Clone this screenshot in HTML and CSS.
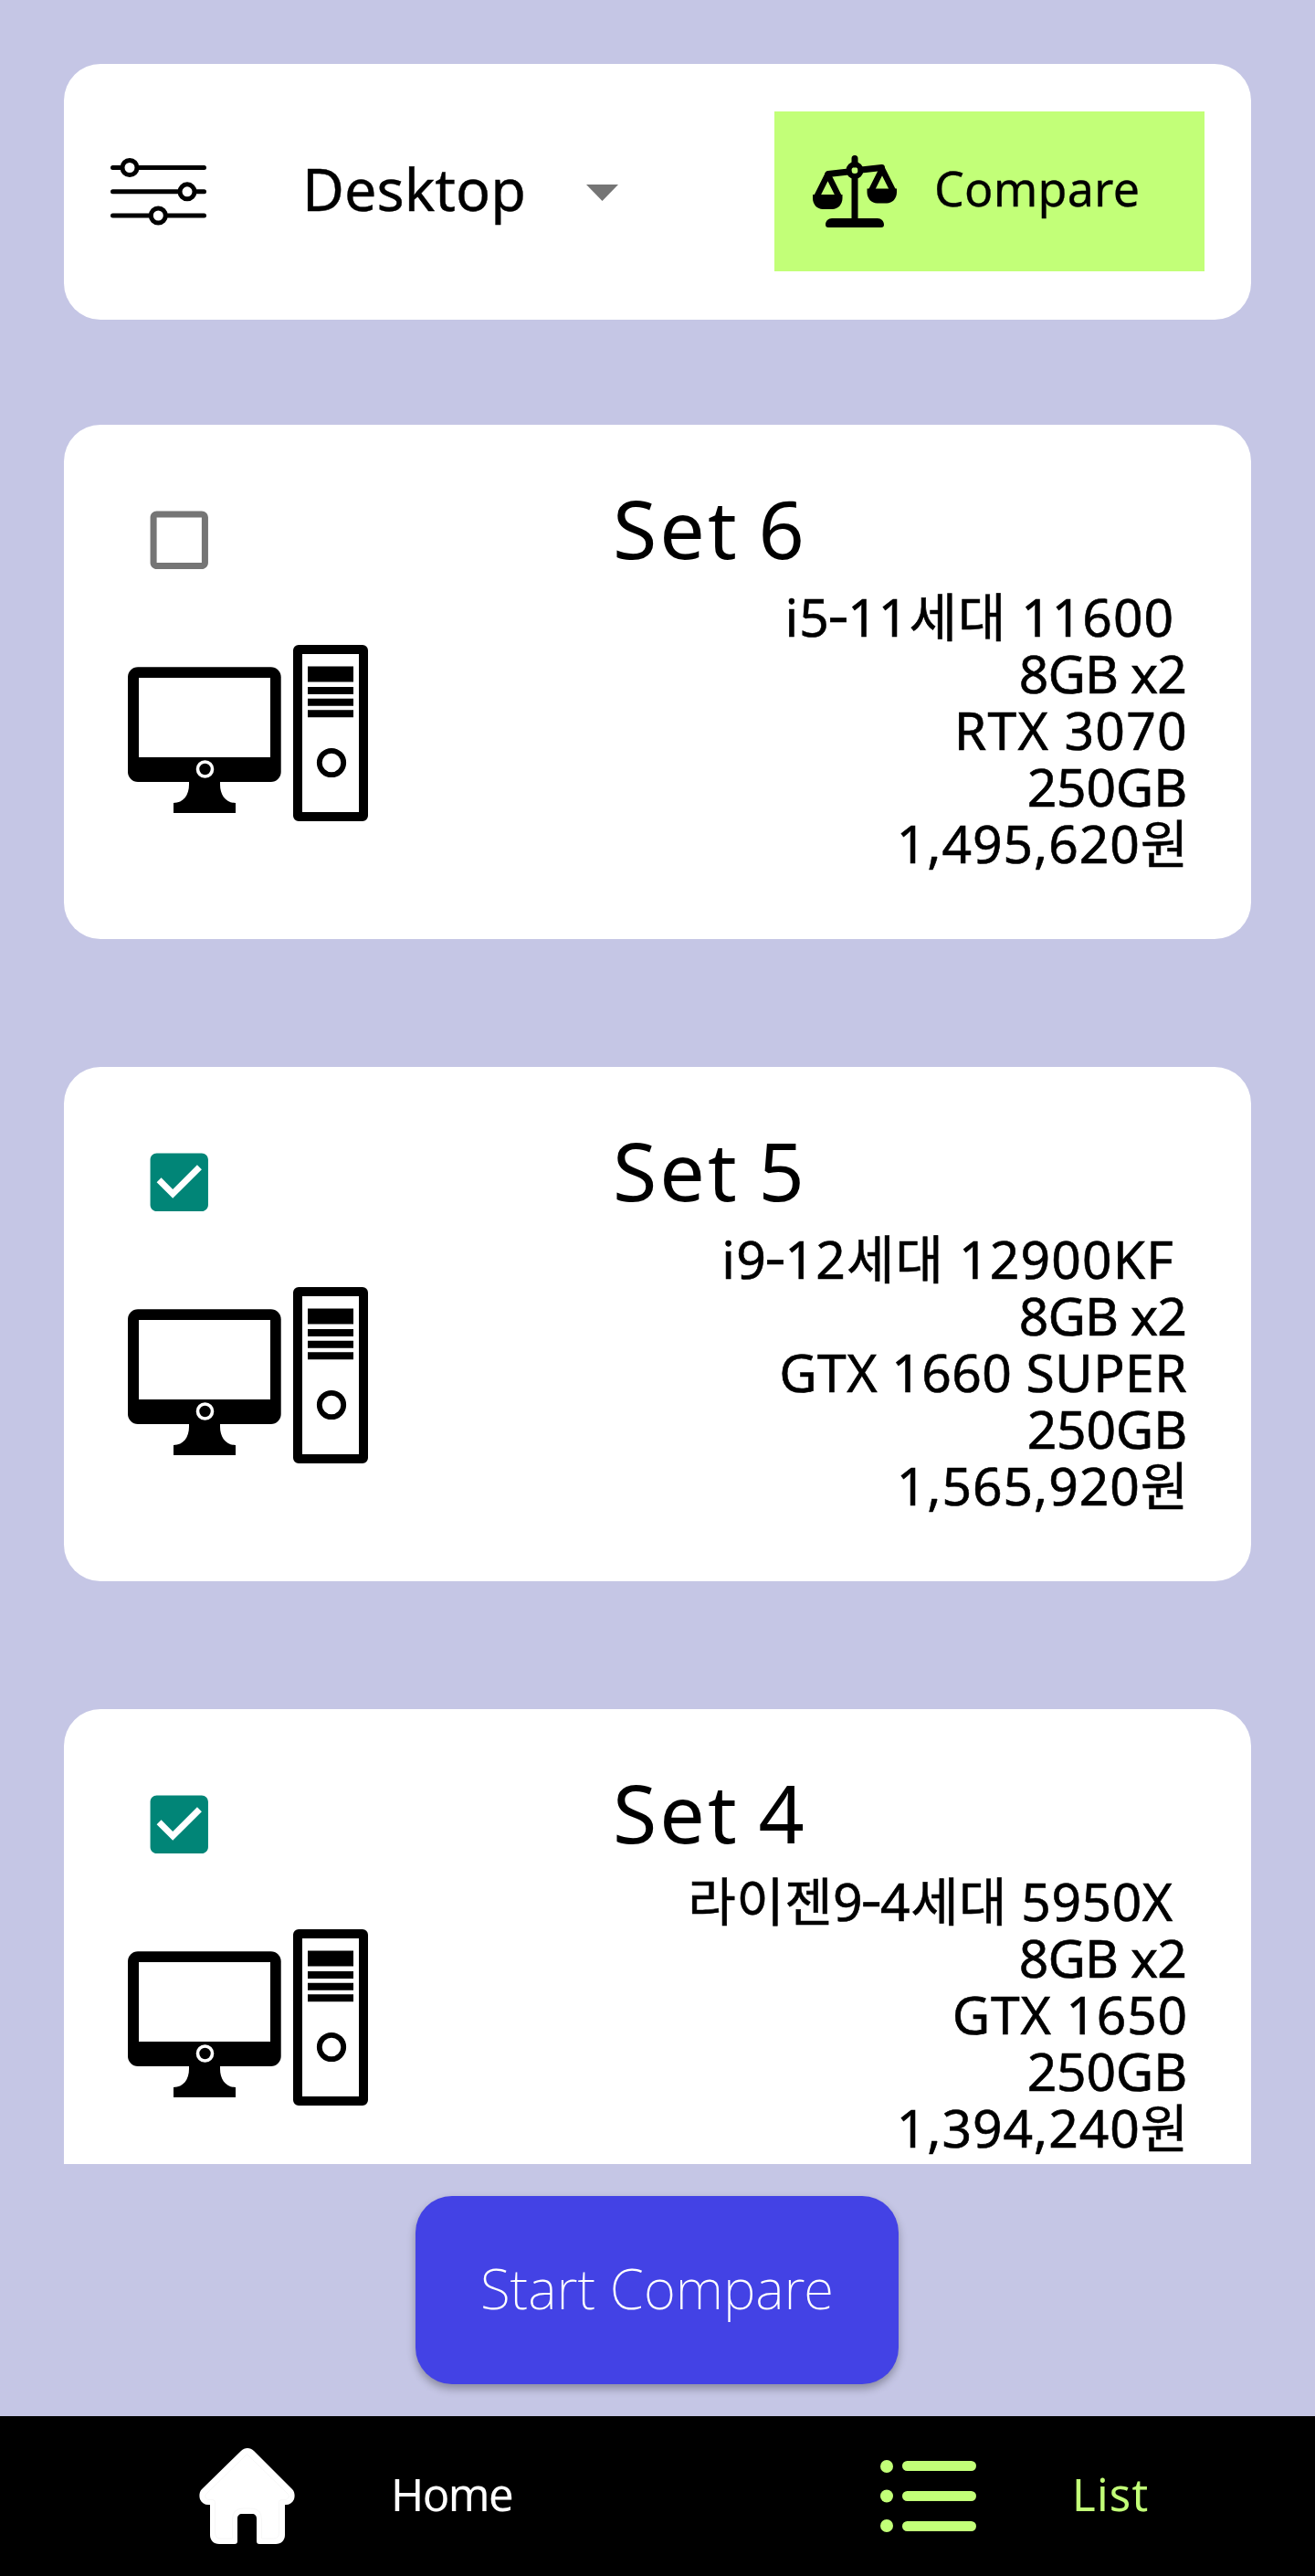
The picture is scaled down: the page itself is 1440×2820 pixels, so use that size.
FILE: index.html
```html
<!DOCTYPE html>
<html lang="ko">
<head>
<meta charset="utf-8">
<title>Set list</title>
<link rel="stylesheet" href="styles.css">
</head>
<body>
<svg class="sprite" aria-hidden="true">
  <symbol id="pc" viewBox="0 0 263 193">
    <rect x="0" y="24.3" width="167.7" height="125.7" rx="11"/>
    <rect x="12" y="36" width="144" height="87" fill="#fff"/>
    <path d="M67 149v4c0 11-6 20-17 20v11h68v-11c-11 0-17-9-17-20v-4z"/>
    <circle cx="84.5" cy="136" r="8" fill="#000" stroke="#fff" stroke-width="3.6"/>
    <rect x="186" y="5" width="72" height="183" rx="1" fill="#fff" stroke="#000" stroke-width="10" stroke-linejoin="round"/>
    <path d="M197 23.5h50v17h-50zM197 46h50v8h-50zM197 58.7h50v8h-50zM197 71.300h50v8h-50z"/>
    <circle cx="223" cy="129" r="13.200" fill="none" stroke="#000" stroke-width="5.800"/>
  </symbol>
</svg>
<main class="screen">
  <header class="toolbar">
    <svg class="filter-icon" viewBox="0 0 106 74" fill="#fff" stroke="#000" stroke-width="5" stroke-linecap="round">
      <path d="M2.500 10.500h100M2.500 36.800h100M2.500 63h100"/>
      <circle cx="21" cy="10.500" r="8"/>
      <circle cx="84" cy="36.800" r="8"/>
      <circle cx="52.300" cy="63" r="8"/>
    </svg>
    <div class="picker">
      <span class="picker-label">Desktop</span>
      <svg class="caret" viewBox="0 0 35 18"><path d="M0 0h35L17.500 18z" fill="#757575"/></svg>
    </div>
    <div class="compare">
      <svg class="scales-icon" viewBox="0 0 92 79">
        <g fill="none" stroke="#000" stroke-linecap="round" stroke-linejoin="round">
          <path d="M46 3.500V10M46 24v48" stroke-width="7"/>
          <path d="M17 20.500L39 18M53 16L75.500 13.500" stroke-width="7"/>
          <circle cx="46" cy="16.500" r="6.500" stroke-width="6"/>
          <path d="M16.500 21L4.500 45M16.500 21L28.500 45M76 15L64 39M76 15L88 39" stroke-width="6.500"/>
        </g>
        <path d="M0 43h32.500v4c0 7-5 12-11 12H11c-6 0-11-5-11-12zM59.500 36.500H92v4c0 7-5 12-11 12H70.500c-6 0-11-5-11-12zM21 69h50c4 0 7 3 7 7 0 2-1 3-3 3H17c-2 0-3-1-3-3 0-4 3-7 7-7z"/>
      </svg>
      <span class="compare-label">Compare</span>
    </div>
  </header>

  <section class="list">
    <article class="card set-6">
      <div class="media">
        <svg class="checkbox" viewBox="0 0 24 24" fill="#757575"><path d="M19 5v14H5V5h14m0-2H5c-1.100 0-2 .9-2 2v14c0 1.100.9 2 2 2h14c1.100 0 2-.9 2-2V5c0-1.100-.9-2-2-2z"/></svg>
        <svg class="pc-icon"><use href="#pc"/></svg>
      </div>
      <div class="info">
        <h2 class="title">Set 6</h2>
        <p class="spec cpu">i5<span class="dash">-</span>11세대 11600&nbsp;</p>
        <p class="spec ram">8GB x2</p>
        <p class="spec gpu">RTX 3070</p>
        <p class="spec disk">250GB</p>
        <p class="spec price">1,495,620원</p>
      </div>
    </article>
    <article class="card set-5">
      <div class="media">
        <svg class="checkbox" viewBox="0 0 24 24" fill="#018577"><path d="M19 3H5c-1.110 0-2 .9-2 2v14c0 1.100.89 2 2 2h14c1.110 0 2-.9 2-2V5c0-1.100-.89-2-2-2zm-9 14l-5-5 1.410-1.410L10 14.170l7.590-7.590L19 8l-9 9z"/></svg>
        <svg class="pc-icon"><use href="#pc"/></svg>
      </div>
      <div class="info">
        <h2 class="title">Set 5</h2>
        <p class="spec cpu">i9<span class="dash">-</span>12세대 12900KF&nbsp;</p>
        <p class="spec ram">8GB x2</p>
        <p class="spec gpu">GTX 1660 SUPER</p>
        <p class="spec disk">250GB</p>
        <p class="spec price">1,565,920원</p>
      </div>
    </article>
    <article class="card set-4">
      <div class="media">
        <svg class="checkbox" viewBox="0 0 24 24" fill="#018577"><path d="M19 3H5c-1.110 0-2 .9-2 2v14c0 1.100.89 2 2 2h14c1.110 0 2-.9 2-2V5c0-1.100-.89-2-2-2zm-9 14l-5-5 1.410-1.410L10 14.170l7.590-7.590L19 8l-9 9z"/></svg>
        <svg class="pc-icon"><use href="#pc"/></svg>
      </div>
      <div class="info">
        <h2 class="title">Set 4</h2>
        <p class="spec cpu">라이젠9<span class="dash">-</span>4세대 5950X&nbsp;</p>
        <p class="spec ram">8GB x2</p>
        <p class="spec gpu">GTX 1650</p>
        <p class="spec disk">250GB</p>
        <p class="spec price">1,394,240원</p>
      </div>
    </article>
  </section>

  <div class="actions">
    <button class="start" type="button">Start Compare</button>
  </div>

  <nav class="tabs">
    <a class="tab tab-home">
      <svg class="home-icon" viewBox="0 0 105 105">
        <path d="M46 3c4-4 10-4 14 0l42 42c3 3 3 8 2 11-2 4-5 6-9 6h-1v33c0 6-4 10-10 10H66c-2 0-3-1-3-3V77c0-3-2-5-5-5H47c-3 0-5 2-5 5v25c0 2-1 3-3 3H22c-6 0-10-4-10-10V62h-2c-4 0-7-2-9-6-1-3-1-8 2-11z" fill="#fff"/>
        <path d="M52.500 6.500L8 50c-2 2-2 6 3 6.500h3.500q3 0 3 3V93q0 6 6 6h13V78q0-12 12-12h8q12 0 12 12v21h13q6 0 6-6V59.500q0-3 3-3h3.500c5-.5 5-4.500 3-6.500z" fill="none" stroke="#eee" stroke-width=".5"/>
      </svg>
      <span class="tab-label">Home</span>
    </a>
    <a class="tab tab-list">
      <svg class="list-icon" viewBox="0 0 105 79" fill="#c2ff78">
        <circle cx="7" cy="7" r="7"/><circle cx="7" cy="39.500" r="7"/><circle cx="7" cy="72" r="7"/>
        <rect x="24" y="1" width="81" height="11" rx="5.500"/><rect x="24" y="34" width="81" height="11" rx="5.500"/><rect x="24" y="67" width="81" height="11" rx="5.500"/>
      </svg>
      <span class="tab-label">List</span>
    </a>
  </nav>
</main>
</body>
</html>
```
FILE: styles.css
```css
* { box-sizing: border-box; }

body {
  margin: 0;
  background: #c5c6e5;
  color: #000;
  font-family: "Noto Sans", "Noto Sans CJK KR", sans-serif;
}

svg { display: block; flex: none; }
.sprite { width: 0; height: 0; position: absolute; }

.screen {
  display: flex;
  flex-direction: column;
  width: 1440px;
  height: 2820px;
  padding-top: 70px;
}

.toolbar {
  display: flex;
  align-items: center;
  height: 280px;
  margin: 0 70px;
  padding: 0 51px;
  border-radius: 40px;
  background: #fff;
}
.filter-icon { width: 106px; height: 74px; margin: 0 104px 1px 0; }
.picker { display: flex; align-items: center; flex: 1; }
.picker-label {
  width: 311px;
  font-size: 63px;
  line-height: 80px;
  padding-bottom: 7px;
  -webkit-text-stroke: 0.4px;
}
.caret { width: 35px; height: 18px; margin-top: 2px; }
.compare {
  display: flex;
  align-items: center;
  width: 471px;
  height: 175px;
  margin-bottom: 1px;
  padding-left: 42px;
  background: #c2ff78;
}
.scales-icon { width: 92px; height: 79px; margin-right: 41px; }
.compare-label {
  font-size: 52px;
  line-height: 70px;
  letter-spacing: 0.2px;
  padding-bottom: 8px;
  -webkit-text-stroke: 0.3px;
}

.list {
  display: flex;
  flex-direction: column;
  gap: 140px;
  height: 1904px;
  margin-top: 115px;
  padding: 0 70px;
  overflow: hidden;
}
.card {
  display: flex;
  flex: none;
  height: 563px;
  border-radius: 40px;
  background: #fff;
}
.media { width: 601px; padding: 84px 0 0 70px; }
.checkbox { width: 84.5px; height: 84.5px; margin-left: 13.5px; }
.pc-icon { width: 263px; height: 193px; margin-top: 72.5px; }
.info { flex: 1; padding: 63px 70px 0 0; }
.title {
  margin: 0 0 16px;
  font-size: 88px;
  font-weight: 400;
  line-height: 100px;
  letter-spacing: 3px;
  word-spacing: -5px;
}
.spec {
  margin: 0;
  font-size: 57px;
  line-height: 62px;
  text-align: right;
  white-space: nowrap;
  -webkit-text-stroke: 0.6px;
}
.dash { display: inline-block; line-height: 1; transform: translateY(-3px) scaleX(1.25); }
.cpu { letter-spacing: 1px; margin-right: -2px; }
.ram { letter-spacing: -0.9px; margin-right: 1px; }
.gpu { letter-spacing: 1.3px; margin-right: -1px; }
.disk { letter-spacing: -0.2px; }
.price { letter-spacing: 0.9px; margin-right: -2px; }
.set-5 .cpu { letter-spacing: 1.15px; }
.set-5 .gpu { letter-spacing: 0.4px; margin-right: 0; }
.set-4 .cpu { letter-spacing: 0.5px; margin-right: 0; }
.set-4 .gpu { letter-spacing: 0.8px; }

.actions {
  display: flex;
  justify-content: center;
  align-items: flex-start;
  height: 276px;
  padding: 35px 1px 0 0;
}
.start {
  width: 529px;
  height: 206px;
  padding: 0 0 5px;
  border: 0;
  border-radius: 40px;
  background: #4342e5;
  color: #fff;
  font: 200 60px/80px "Noto Sans", sans-serif;
  box-shadow: 0 5px 10px rgba(0, 0, 0, 0.3);
}

.tabs {
  display: flex;
  height: 175px;
  background: #000;
  font-size: 49px;
  line-height: 66px;
}
.tab { display: flex; align-items: center; width: 50%; }
.tab-home { padding-left: 218px; color: #fff; }
.tab-list { padding-left: 244px; color: #c2ff78; }
.home-icon { width: 105px; height: 105px; margin-right: 105px; }
.list-icon { width: 105px; height: 79px; margin-right: 105px; }
.tab-label { padding-bottom: 6px; }
.tab-home .tab-label { letter-spacing: -1.6px; }
.tab-list .tab-label { letter-spacing: 1.2px; }
```
